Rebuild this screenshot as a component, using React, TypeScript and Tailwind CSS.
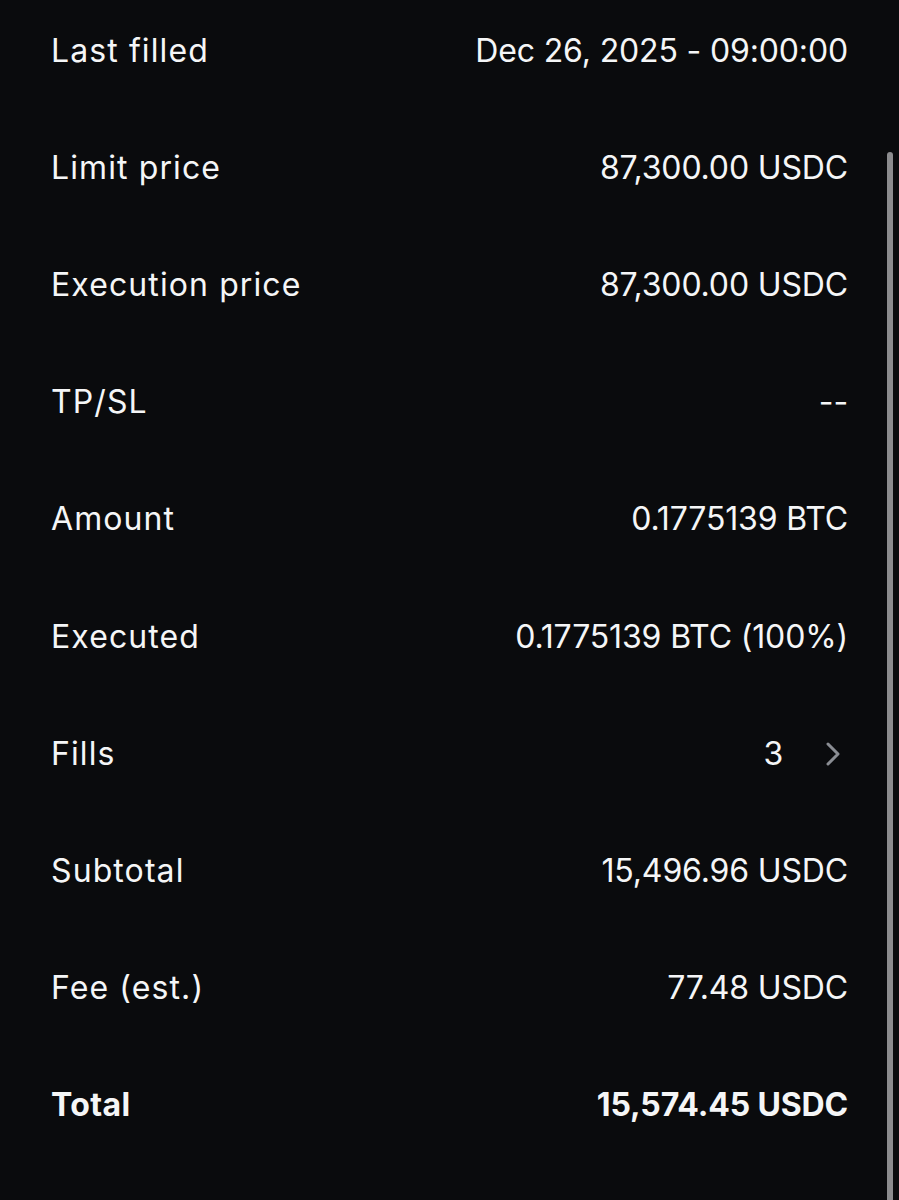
import React from 'react';

type Row = { label: string; value: string; bold?: boolean; chevron?: boolean };

const rows: Row[] = [
  { label: 'Last filled', value: 'Dec 26, 2025 - 09:00:00' },
  { label: 'Limit price', value: '87,300.00 USDC' },
  { label: 'Execution price', value: '87,300.00 USDC' },
  { label: 'TP/SL', value: '--' },
  { label: 'Amount', value: '0.1775139 BTC' },
  { label: 'Executed', value: '0.1775139 BTC (100%)' },
  { label: 'Fills', value: '3', chevron: true },
  { label: 'Subtotal', value: '15,496.96 USDC' },
  { label: 'Fee (est.)', value: '77.48 USDC' },
  { label: 'Total', value: '15,574.45 USDC', bold: true },
];

const App: React.FC = () => {
  return (
    <div
      className="relative h-[1200px] w-[899px] overflow-hidden bg-[#0a0b0d] text-[#f5f6f7]"
      style={{ fontFamily: 'Inter, "Liberation Sans", sans-serif' }}
    >
      <div className="-mt-[8px] flex flex-col pl-[51px] pr-[51px]">
        {rows.map((r) => (
          <div
            key={r.label}
            className={`flex h-[117.2px] items-center justify-between text-[32px] ${
              r.bold ? 'font-bold' : 'font-normal'
            }`}
          >
            <span className={r.bold ? 'tracking-[0.4px]' : 'tracking-[1.1px]'}>{r.label}</span>
            <span className="flex items-center tracking-[-0.15px]">
              {r.value}
              {r.chevron && (
                <svg
                  width="14"
                  height="26"
                  viewBox="0 0 14 26"
                  fill="none"
                  className="ml-[43px] mr-[8px]"
                >
                  <path d="M2 3 L12 13 L2 23" stroke="#8a8d93" strokeWidth="3" strokeLinecap="round" strokeLinejoin="round" />
                </svg>
              )}
            </span>
          </div>
        ))}
      </div>
      {/* scrollbar thumb */}
      <div className="absolute right-[6px] top-[152px] h-[1060px] w-[6px] rounded-full bg-[#8c8c8e]" />
    </div>
  );
};

export default App;
